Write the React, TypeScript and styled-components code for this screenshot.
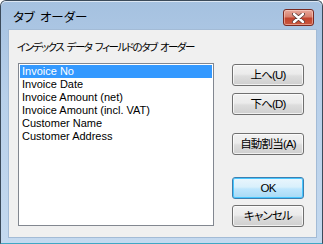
import React from "react";
import styled, { createGlobalStyle } from "styled-components";

/* Styles */
const GlobalStyle = createGlobalStyle`
	html, body {
		margin: 0;
		padding: 0;
		background: #ffffff;
	}
`;

const uiFont = `"Liberation Sans", "Noto Sans CJK JP", sans-serif`;

const Window = styled.div`
	box-sizing: border-box;
	display: flex;
	flex-direction: column;
	width: 323px;
	height: 244px;
	border: 1px solid #3b4a5a;
	border-bottom-color: #3fa7c4;
	border-radius: 6px 6px 0 0;
	background: linear-gradient(180deg, #a5c1e0 0%, #b8d0ea 40%, #c4d9ef 100%);
	font-family: ${uiFont};
	font-feature-settings: "palt";
	color: #000000;
`;

const TitleBar = styled.div`
	display: flex;
	align-items: flex-start;
	justify-content: space-between;
	height: 29px;
	padding: 0 8px 0 12px;
	box-shadow: inset 0 1px 0 rgba(255, 255, 255, 0.6);
	border-radius: 5px 5px 0 0;
`;

const Title = styled.div`
	padding-top: 9px;
	font-size: 12.5px;
	line-height: 16px;
	letter-spacing: -0.1px;
	word-spacing: 2px;
`;

const CloseButton = styled.div`
	box-sizing: border-box;
	display: flex;
	align-items: center;
	justify-content: center;
	width: 31px;
	height: 17px;
	margin-top: 8px;
	border: 1px solid #7a2a22;
	border-radius: 3px;
	background: linear-gradient(180deg, #e9a99c 0%, #d8816f 45%, #c2432d 55%, #c9583f 100%);
	box-shadow: inset 0 0 0 1px rgba(255, 220, 210, 0.5);
`;

const Client = styled.div`
	box-sizing: border-box;
	display: flex;
	flex-direction: column;
	height: 207px;
	margin: 0 6px 0 8px;
	padding: 10px 0 0 8px;
	background: #f0f0f0;
	outline: 1px solid #a3bbd6;
`;

const Caption = styled.div`
	font-size: 10.5px;
	line-height: 14px;
	letter-spacing: -1.5px;
	word-spacing: 2px;
	white-space: nowrap;
`;

const Body = styled.div`
	display: flex;
	margin-top: 9px;
	padding-left: 1px;
`;

const ListBox = styled.div`
	box-sizing: border-box;
	width: 196px;
	height: 163px;
	padding: 1px;
	border: 1px solid #828790;
	background: #ffffff;
`;

const ListItem = styled.div<{ selected: boolean }>`
	height: 13px;
	padding-left: 2px;
	font-size: 11px;
	line-height: 13px;
	white-space: nowrap;
	color: ${({ selected }) => (selected ? "#ffffff" : "#000000")};
	background: ${({ selected }) => (selected ? "#3399ff" : "transparent")};
`;

const ButtonColumn = styled.div`
	display: flex;
	flex-direction: column;
	margin-left: 18px;
	padding-top: 1px;
`;

const Button = styled.div<{ gap: number; isDefault?: boolean }>`
	box-sizing: border-box;
	display: flex;
	align-items: center;
	justify-content: center;
	width: 72px;
	height: 22px;
	margin-top: ${({ gap }) => gap}px;
	border: 1px solid ${({ isDefault }) => (isDefault ? "#3c7fb1" : "#707070")};
	border-radius: 3px;
	background: ${({ isDefault }) =>
		isDefault
			? "linear-gradient(180deg, #eaf6fd 0%, #d9f0fc 45%, #bee6fd 55%, #a7d9f5 100%)"
			: "linear-gradient(180deg, #f2f2f2 0%, #ebebeb 45%, #dddddd 55%, #cfcfcf 100%)"};
	box-shadow: inset 0 0 0 1px ${({ isDefault }) => (isDefault ? "#48c7ff" : "rgba(255, 255, 255, 0.7)")};
	font-size: 11.5px;
	line-height: 14px;
	letter-spacing: -0.8px;
	white-space: nowrap;
`;

const items = [
	"Invoice No",
	"Invoice Date",
	"Invoice Amount (net)",
	"Invoice Amount (incl. VAT)",
	"Customer Name",
	"Customer Address",
];

const buttons = [
	{ label: "上へ(U)", gap: 0 },
	{ label: "下へ(D)", gap: 7 },
	{ label: "自動割当(A)", gap: 18 },
	{ label: "OK", gap: 22, isDefault: true },
	{ label: "キャンセル", gap: 6 },
];

export default function App() {
	return (
		<React.Fragment>
			<GlobalStyle />
			<Window>
				<TitleBar>
					<Title>タブ オーダー</Title>
					<CloseButton>
						<svg width="13" height="10" viewBox="0 0 13 10">
							<path d="M2 1 L11 9 M11 1 L2 9" stroke="#5a3a36" strokeWidth="4" strokeLinecap="round" />
							<path d="M2 1 L11 9 M11 1 L2 9" stroke="#ffffff" strokeWidth="2.4" strokeLinecap="round" />
						</svg>
					</CloseButton>
				</TitleBar>
				<Client>
					<Caption>インデックス データ フィールドのタブ オーダー</Caption>
					<Body>
						<ListBox>
							{items.map((item, index) => (
								<ListItem key={item} selected={index === 0}>
									{item}
								</ListItem>
							))}
						</ListBox>
						<ButtonColumn>
							{buttons.map((button) => (
								<Button key={button.label} gap={button.gap} isDefault={button.isDefault}>
									{button.label}
								</Button>
							))}
						</ButtonColumn>
					</Body>
				</Client>
			</Window>
		</React.Fragment>
	);
}
